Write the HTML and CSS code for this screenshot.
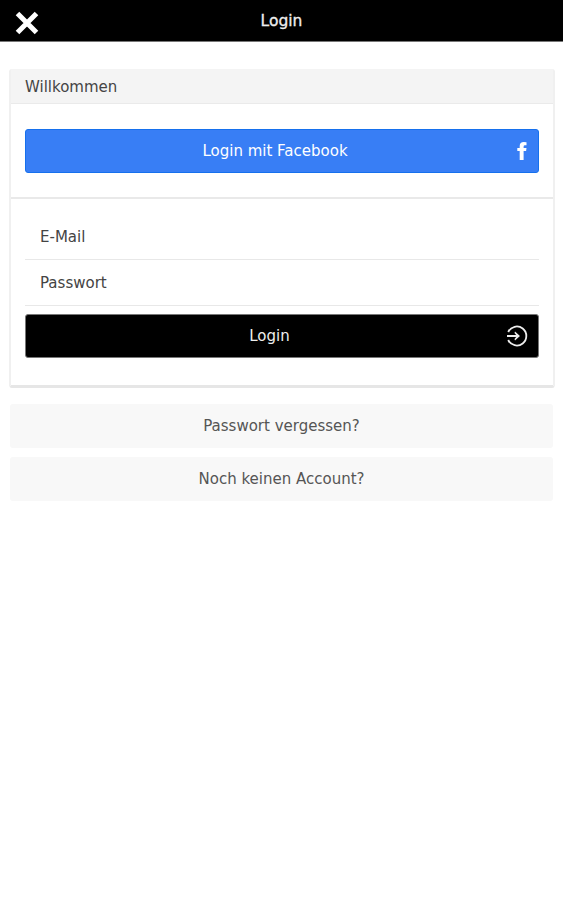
FILE: index.html
```html
<!DOCTYPE html>
<html lang="de">
<head>
<meta charset="utf-8">
<title>Login</title>
<link rel="stylesheet" href="styles.css">
</head>
<body>
<header class="bar">
  <button class="close" aria-label="Schließen"><svg width="24" height="24" viewBox="0 0 24 24"><path d="M2.500 2.500L21.500 21.500M21.500 2.500L2.500 21.500" stroke="#fff" stroke-width="5"/></svg></button>
  <h1 class="title"><span>Login</span></h1>
  <span></span>
</header>
<main class="content">
  <section class="card">
    <h2 class="card-header"><span>Willkommen</span></h2>
    <div class="social">
      <button class="button facebook"><span class="label">Login mit Facebook</span><svg class="fb-icon" width="10" height="18" viewBox="0 0 10 18"><path fill="#fff" d="M9.500 .2V3.300H8Q6.600 3.300 6.600 4.700V6H9.500L9.100 9H6.600V18H2.700V9H.3V6H2.700V4Q2.700 0 6.800 0Q8.500 0 9.500 .2Z"/></svg></button>
    </div>
    <form class="form">
      <label class="field"><span>E-Mail</span></label>
      <label class="field"><span>Passwort</span></label>
      <button type="button" class="button login"><span class="label">Login</span><svg width="22" height="22" viewBox="0 0 22 22" fill="none" stroke="#eee" stroke-width="1.800"><path d="M2.200 7A9.500 9.500 0 1 1 2.200 15M1 11H12"/><path fill="#eee" stroke="none" d="M9 6.500L14 11L9 15.500L8.500 14L11 11L8.500 8Z"/></svg></button>
    </form>
  </section>
  <button class="button link"><span>Passwort vergessen?</span></button>
  <button class="button link"><span>Noch keinen Account?</span></button>
</main>
</body>
</html>
```
FILE: styles.css
```css
* { box-sizing: border-box; }
body { margin: 0; background: #fff; color: #444; font: 15px/20px "DejaVu Sans", sans-serif; }
button { font: inherit; border: 0; margin: 0; padding: 0; background: none; }
.bar { height: 42px; background: #000; border-bottom: 1px solid #777; display: grid; grid-template-columns: 52px 1fr 52px; align-items: center; color: #eee; }
.close { height: 24px; margin: 4px 0 0 15px; text-align: left; }
.close svg { display: block; }
.title { margin: 1px 0 0; font-size: 15.500px; font-weight: 400; text-align: center; -webkit-text-stroke: .3px #eee; }
.content { padding: 27px 8px 0 9px; }
.card { height: 319px; border: 1px solid #eee; border-width: 0 2px 3px; border-color: #f0f0f0 #f0f0f0 #e6e6e6; border-radius: 3px; margin-bottom: 16px; }
.card-header { margin: 0; height: 35px; padding: 8px 14px; background: #f4f4f4; border-bottom: 1px solid #eaeaea; font-size: 15px; line-height: 20px; font-weight: 400; }
.social { height: 95px; padding: 25px 14px 0; border-bottom: 2px solid #e9e9e9; }
.button { display: flex; align-items: center; justify-content: center; width: 100%; height: 44px; border-radius: 3px; color: #fff; }
.label { flex: 1; text-align: center; }
.facebook { background: #387ef5; border: 1px solid #1670ed; padding: 0 11px 0 0; }
.facebook .label { padding-left: 7px; }
.form { padding: 15px 14px 0; }
.field { display: flex; align-items: center; height: 46px; padding: 1px 15px 0; border-bottom: 1px solid #e8e8e8; }
.login { margin-top: 8px; background: #000; border: 1px solid #777; color: #eee; padding: 0 10px 0 7px; }
.link { width: 543px; margin: 0 1px 9px; background: #f8f8f8; color: #555; }
```
